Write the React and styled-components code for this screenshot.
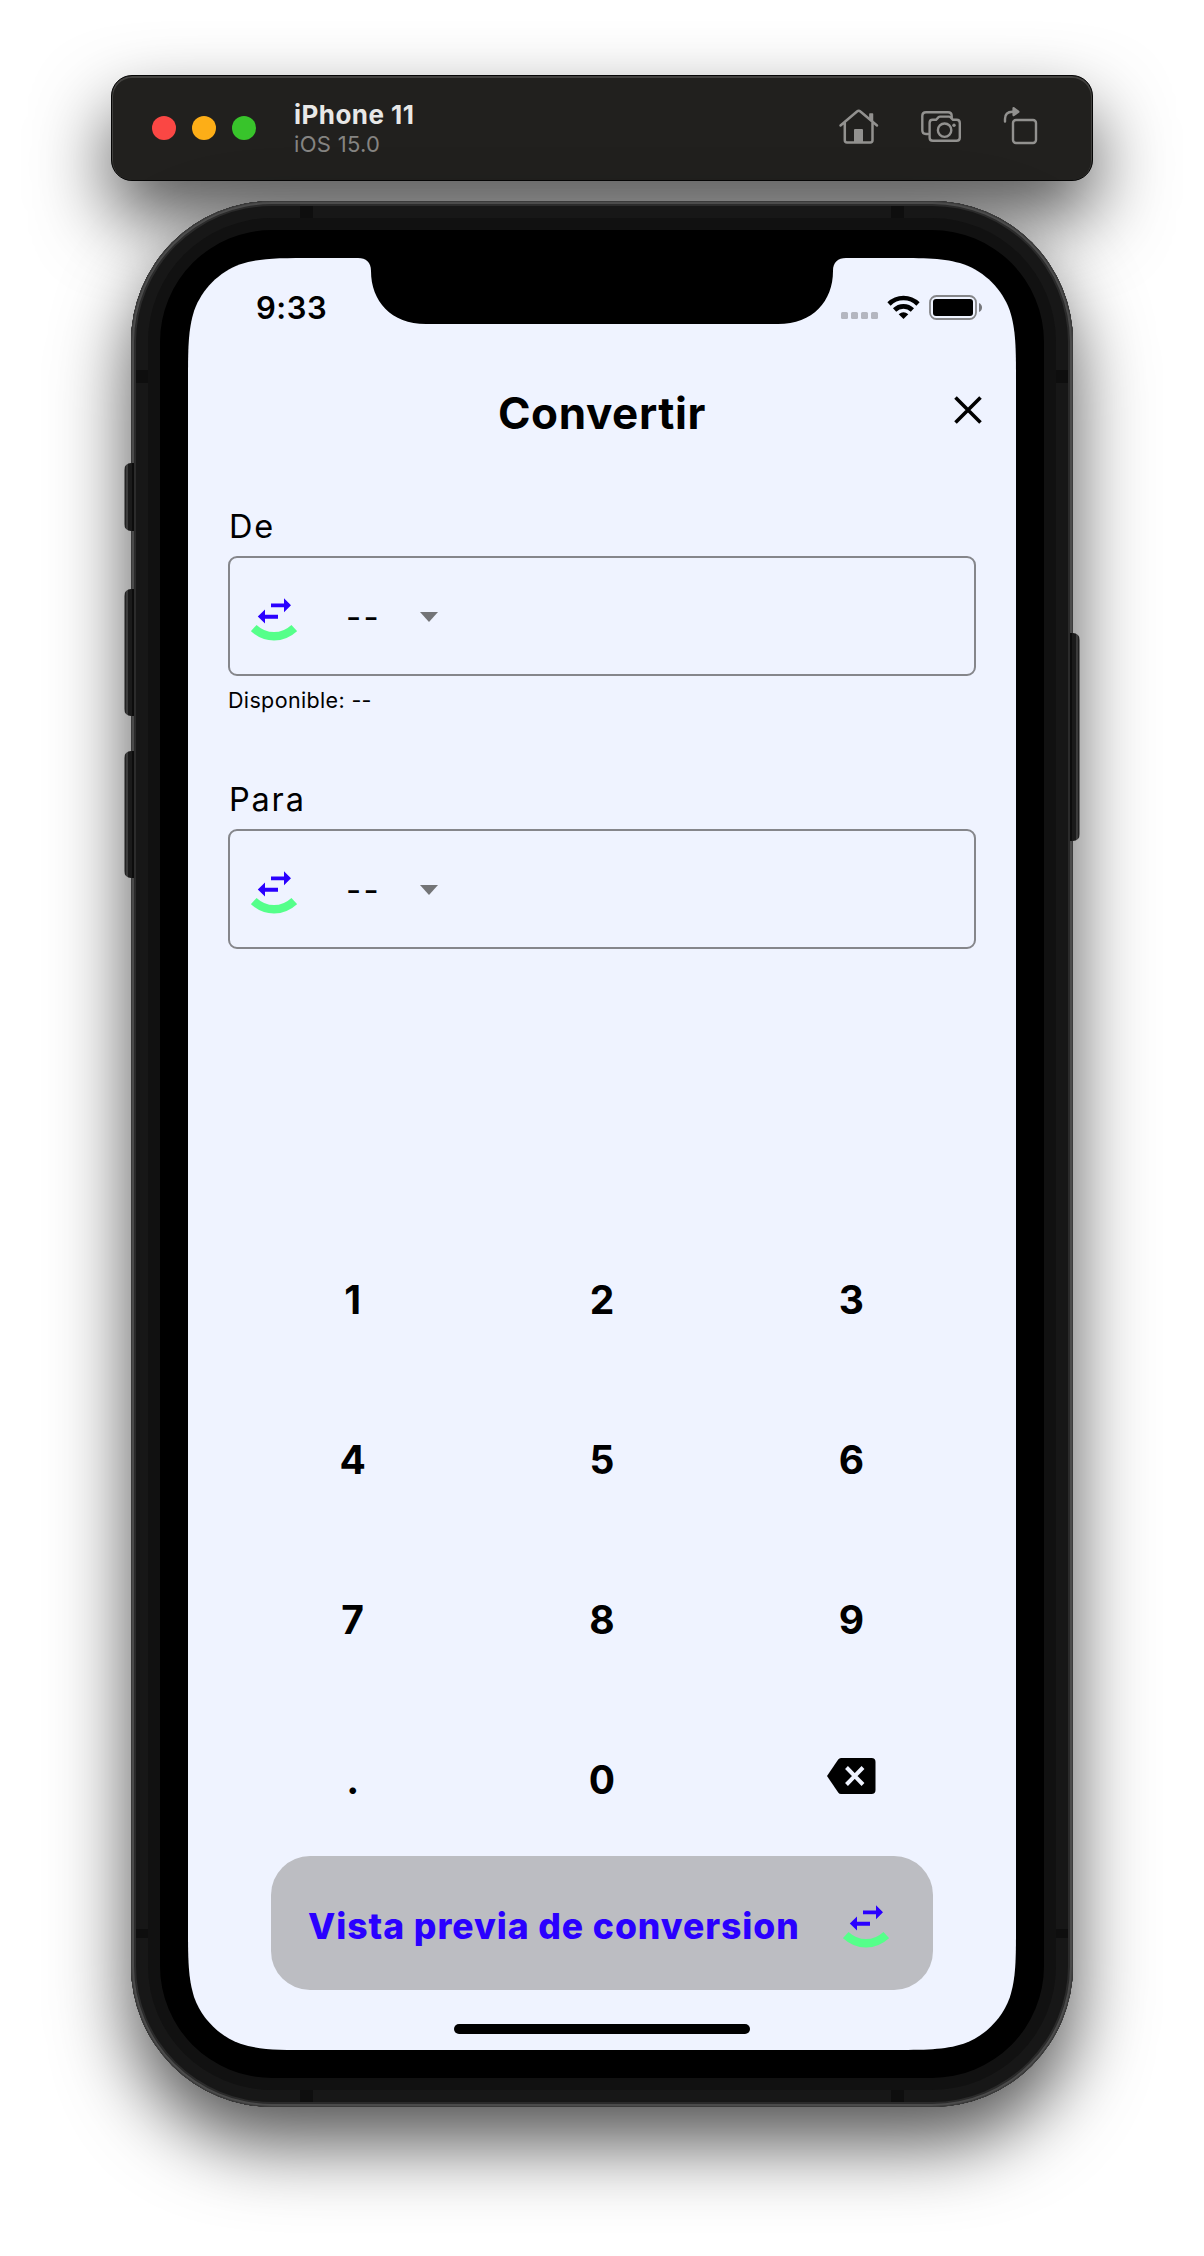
import React from "react";
import styled, { createGlobalStyle } from "styled-components";

const Global = createGlobalStyle`
  * { box-sizing: border-box; }
  body { margin: 0; background: #fff; font-family: Inter, "Liberation Sans", sans-serif; }
`;

const shadow = "0 36px 76px rgba(0, 0, 0, 0.68)";

// Outline of a w x h panel with continuous (squircle) corners of radius r.
const smoothOutline = (w, h, r) => {
  const [a, b, c, d, e, f, g] = [1.52866, 1.08849, 0.86841, 0.63149, 0.37282, 0.16906, 0.07491].map((k) => k * r);
  return [
    `M${a} 0H${w - a}`,
    `C${w - b} 0 ${w - c} 0 ${w - d} ${g}C${w - e} ${f} ${w - f} ${e} ${w - g} ${d}C${w} ${c} ${w} ${b} ${w} ${a}`,
    `V${h - a}`,
    `C${w} ${h - b} ${w} ${h - c} ${w - g} ${h - d}C${w - f} ${h - e} ${w - e} ${h - f} ${w - d} ${h - g}C${w - c} ${h} ${w - b} ${h} ${w - a} ${h}`,
    `H${a}`,
    `C${b} ${h} ${c} ${h} ${d} ${h - g}C${e} ${h - f} ${f} ${h - e} ${g} ${h - d}C0 ${h - c} 0 ${h - b} 0 ${h - a}`,
    `V${a}`,
    `C0 ${b} 0 ${c} ${g} ${d}C${f} ${e} ${e} ${f} ${d} ${g}C${c} 0 ${b} 0 ${a} 0Z`,
  ].join("");
};

const Stage = styled.main`
  width: 1204px;
  height: 2256px;
  padding-top: 75px;
  display: flex;
  flex-direction: column;
  align-items: center;
  gap: 20px;
  overflow: hidden;
`;

const Toolbar = styled.header`
  width: 982px;
  height: 106px;
  flex: none;
  border-radius: 21px;
  background: #21201e;
  border: 1px solid #050505;
  box-shadow: inset 0 1px 0 1px #42413f, ${shadow};
  display: flex;
  align-items: center;
  padding: 0 54px 0 40px;
`;

const Lights = styled.div`
  display: flex;
  gap: 16px;
`;

const Light = styled.span`
  width: 24px;
  height: 24px;
  border-radius: 50%;
  background: ${(p) => p.$color};
`;

const Device = styled.div`
  margin-left: 38px;
  flex: 1;
`;

const DeviceName = styled.div`
  font-size: 26px;
  line-height: 31px;
  font-weight: 700;
  color: #e8e8e7;
  letter-spacing: 0.45px;
`;

const DeviceOs = styled.div`
  font-size: 22px;
  line-height: 28px;
  color: #858482;
  letter-spacing: 0.3px;
`;

const Tools = styled.div`
  display: flex;
  align-items: center;
  gap: 40px;
  margin-bottom: 5px;
`;

const Phone = styled.section`
  position: relative;
  width: 942px;
  height: 1906px;
  flex: none;
  padding: 57px;
  border-radius: 141px;
  background: #000;
  box-shadow: inset 0 0 0 1px #3a3a3a, inset 0 0 0 3px #4b4b4b, inset 0 0 0 5px #2b2b2b,
    inset 0 0 0 17px #171717, inset 0 0 0 29px #111, ${shadow};
`;

const Antenna = styled.i`
  position: absolute;
  left: ${(p) => p.$x}px;
  top: ${(p) => p.$y}px;
  width: ${(p) => p.$w}px;
  height: ${(p) => p.$h}px;
  background: #0e0e0e;
`;

const SideButton = styled.i`
  position: absolute;
  top: ${(p) => p.$y}px;
  ${(p) => (p.$right ? "right: -7px;" : "left: -7px;")}
  width: 10px;
  height: ${(p) => p.$h}px;
  background: linear-gradient(${(p) => (p.$right ? "to left" : "to right")}, #6a6a6a 0 1px, #222 1px 2px, #3c3c3c 2px 4px, #1a1a1a 4px 8px, #0c0c0c 8px);
  border-radius: ${(p) => (p.$right ? "0 7px 7px 0" : "7px 0 0 7px")};
`;

const Screen = styled.div`
  position: relative;
  width: 828px;
  height: 1792px;
  clip-path: path("${smoothOutline(828, 1792, 83)}");
  background: #eff3ff;
  color: #000;
  display: flex;
  flex-direction: column;
`;

const Notch = styled.svg`
  position: absolute;
  top: 0;
  left: 170px;
`;

const StatusBar = styled.div`
  height: 100px;
  flex: none;
  padding: 0 33px 0 68px;
  display: flex;
  align-items: center;
  justify-content: space-between;
`;

const Clock = styled.time`
  font-size: 31px;
  line-height: 40px;
  font-weight: 600;
  letter-spacing: 0.5px;
`;

const StatusIcons = styled.svg`
  margin-bottom: 2px;
`;

const Header = styled.div`
  height: 109px;
  flex: none;
  display: grid;
  grid-template-columns: 1fr auto 1fr;
  align-items: center;
`;

const Title = styled.h1`
  grid-column: 2;
  margin: 0;
  font-size: 44px;
  line-height: 54px;
  font-weight: 700;
  letter-spacing: 0.6px;
`;

const CloseButton = styled.button`
  justify-self: end;
  margin: 0 33px 5px 0;
  padding: 0;
  border: 0;
  background: none;
  display: flex;
`;

const Field = styled.div`
  margin: 0 40px;
  padding-top: ${(p) => p.$top || 0}px;
  height: ${(p) => p.$h}px;
  flex: none;
`;

const Label = styled.div`
  font-size: 32.5px;
  line-height: 40px;
  letter-spacing: 1.8px;
  padding-left: 1px;
  margin-bottom: 9px;
`;

const Select = styled.div`
  height: 120px;
  border: 2px solid #85868b;
  border-radius: 9px;
  display: flex;
  align-items: center;
  padding-left: 21px;
`;

const Value = styled.span`
  font-size: 33px;
  line-height: 40px;
  letter-spacing: 2.4px;
  width: 74px;
  margin: 2px 0 0 49px;
`;

const Caret = styled.i`
  border: solid transparent;
  border-width: 10px 9.5px 0;
  border-top-color: #737477;
  margin-top: 1px;
`;

const Available = styled.div`
  margin-top: 9px;
  font-size: 21.5px;
  line-height: 30px;
  letter-spacing: 0.35px;
`;

const Keypad = styled.div`
  margin: auto 40px -4px;
  display: grid;
  grid-template-columns: repeat(3, 1fr);
  grid-auto-rows: 160px;
`;

const Key = styled.button`
  border: 0;
  padding: 0 0 ${(p) => (p.$lift ? 8 : 0)}px;
  background: none;
  color: #000;
  font: 700 39px/48px Inter, sans-serif;
  display: flex;
  align-items: center;
  justify-content: center;
`;

const Preview = styled.button`
  align-self: center;
  width: 662px;
  height: 134px;
  flex: none;
  border: 0;
  border-radius: 39px;
  background: #bcbdc2;
  color: #2a00ff;
  font: 800 35.5px/44px Inter, sans-serif;
  letter-spacing: 0.95px;
  display: flex;
  align-items: center;
  justify-content: space-between;
  padding: 8px 44px 0 37px;
`;

const HomeArea = styled.div`
  height: 60px;
  flex: none;
  display: flex;
  justify-content: center;
  padding-top: 34px;
`;

const HomeBar = styled.i`
  width: 296px;
  height: 10px;
  border-radius: 5px;
  background: #000;
`;

const SwapGlyph = styled.svg`
  display: block;
  flex: none;
  margin-top: ${(p) => p.$drop || 0}px;
`;

const SwapIcon = ({ drop }) => (
  <SwapGlyph width="46" height="44" viewBox="0 0 46 44" $drop={drop}>
    <path fill="#2a00ff" d="M20 5.500h13V0.300l7 7-7 7V9.300H20z M27 16.800v4H14v4.800l-7.200-7 7.200-7v5.200z" />
    <path fill="none" stroke="#55ff8a" strokeWidth="8.400" d="M2.700 30C14.500 41 31.500 41 43.300 30" />
  </SwapGlyph>
);

const SelectRow = () => (
  <Select>
    <SwapIcon drop={7} />
    <Value>--</Value>
    <Caret />
  </Select>
);

const digits = ["1", "2", "3", "4", "5", "6", "7", "8", "9", ".", "0"];

export default function App() {
  return (
    <>
      <Global />
      <Stage>
        <Toolbar>
          <Lights>
            <Light $color="#fa4744" />
            <Light $color="#fdae17" />
            <Light $color="#38c42b" />
          </Lights>
          <Device>
            <DeviceName>iPhone 11</DeviceName>
            <DeviceOs>iOS 15.0</DeviceOs>
          </Device>
          <Tools>
            <svg width="42" height="40" viewBox="838 106 42 40" fill="none" stroke="#92918f" strokeWidth="2.5" strokeLinecap="round" strokeLinejoin="round">
              <path d="M840.500 125.500L857 111.500Q858.700 110 860.400 111.500L877 125.500M844.800 123V140.300Q844.800 142.500 847 142.500H870.300Q872.500 142.500 872.500 140.300V123" />
              <path d="M869.900 114H872.500V121L869.900 118.500Z" fill="#92918f" strokeWidth="1.500" />
              <path d="M854 143V130Q854 129 855 129H862Q863 129 863 130V143Z" fill="#92918f" stroke="none" />
            </svg>
            <svg width="42" height="40" viewBox="920 107 42 40" fill="none" stroke="#92918f" strokeWidth="2.4" strokeLinecap="round" strokeLinejoin="round">
              <path d="M928 135H926Q922.300 135 922.300 131.300V117Q922.300 113.300 926 113.300H948Q951.700 113.300 951.700 117V118.800" />
              <path d="M932.500 120.800H936L938.600 118.200Q939.200 117.600 940 117.600H949Q949.800 117.600 950.400 118.200L953 120.800H956.500Q959.800 120.800 959.800 124V138.500Q959.800 141.800 956.500 141.800H932.800Q929.600 141.800 929.600 138.500V124Q929.600 120.800 932.500 120.800Z" />
              <circle cx="944.600" cy="131.200" r="6.700" />
              <circle cx="954" cy="126.200" r="1.700" fill="#92918f" stroke="none" />
            </svg>
            <svg width="36" height="40" viewBox="1002 104 36 40" fill="none" stroke="#92918f" strokeWidth="2.400" strokeLinecap="round" strokeLinejoin="round">
              <path d="M1005 119.500V117Q1005 109.700 1012.500 109.700H1014" />
              <path d="M1013.600 106.300L1018.300 109.700L1013.600 113.100Z" fill="#92918f" />
              <rect x="1013" y="118" width="23" height="23" rx="3" />
            </svg>
          </Tools>
        </Toolbar>

        <Phone>
          <Antenna $x={169} $y={5} $w={13} $h={12} />
          <Antenna $x={760} $y={5} $w={13} $h={12} />
          <Antenna $x={5} $y={169} $w={12} $h={13} />
          <Antenna $x={925} $y={169} $w={12} $h={13} />
          <Antenna $x={5} $y={1728} $w={12} $h={9} />
          <Antenna $x={925} $y={1728} $w={12} $h={9} />
          <Antenna $x={169} $y={1889} $w={13} $h={12} />
          <Antenna $x={760} $y={1889} $w={13} $h={12} />
          <SideButton $y={262} $h={68} />
          <SideButton $y={388} $h={127} />
          <SideButton $y={550} $h={127} />
          <SideButton $right $y={432} $h={208} />
          <Screen>
            <Notch width="488" height="66" viewBox="0 0 488 66">
              <path d="M0 0H488C480 0 475 4 475 13C475 43 455 66 420 66H68C33 66 13 43 13 13C13 4 8 0 0 0Z" />
            </Notch>
            <StatusBar>
              <Clock>9:33</Clock>
              <StatusIcons width="142" height="26" viewBox="841 294 142 26">
                <g fill="#b4b6c0">
                  <rect x="841" y="312" width="7" height="7" rx="1.500" />
                  <rect x="851" y="312" width="7" height="7" rx="1.500" />
                  <rect x="861" y="312" width="7" height="7" rx="1.500" />
                  <rect x="871" y="312" width="7" height="7" rx="1.500" />
                </g>
                <g fill="none" stroke="#000" strokeWidth="4.600">
                  <path d="M889 304A20.500 20.500 0 0 1 918 304" />
                  <path d="M894.600 310A12.700 12.700 0 0 1 912.400 310" />
                </g>
                <path d="M903.500 319L898.700 314.200Q903.500 310.200 908.300 314.200Z" />
                <rect x="930" y="296" width="46" height="23" rx="6.500" fill="none" stroke="#858689" strokeWidth="1.800" />
                <rect x="933" y="299" width="40" height="17" rx="3" />
                <path d="M979 303Q982 304.500 982 307.500T979 312Z" fill="#77787c" />
              </StatusIcons>
            </StatusBar>
            <Header>
              <Title>Convertir</Title>
              <CloseButton aria-label="Cerrar">
                <svg width="30" height="30" viewBox="0 0 30 30" stroke="#000" strokeWidth="3.600">
                  <path d="M2.500 2.500L27.500 27.500M27.500 2.500L2.500 27.500" />
                </svg>
              </CloseButton>
            </Header>
            <Field $h={312} $top={40}>
              <Label>De</Label>
              <SelectRow />
              <Available>Disponible: --</Available>
            </Field>
            <Field $h={180} $top={1}>
              <Label>Para</Label>
              <SelectRow />
            </Field>
            <Keypad>
              {digits.map((d) => (
                <Key key={d}>{d}</Key>
              ))}
              <Key aria-label="Borrar" $lift>
                <svg width="49" height="36" viewBox="0 0 49 36">
                  <path d="M14 0H44.500Q48.500 0 48.500 4V32Q48.500 36 44.500 36H14Q12.300 36 11.200 34.500L0 18L11.200 1.500Q12.300 0 14 0Z" />
                  <path d="M19.500 9.500L36 26.500M36 9.500L19.500 26.500" stroke="#eff3ff" strokeWidth="4" />
                </svg>
              </Key>
            </Keypad>
            <Preview>
              <span>Vista previa de conversion</span>
              <SwapIcon />
            </Preview>
            <HomeArea>
              <HomeBar />
            </HomeArea>
          </Screen>
        </Phone>
      </Stage>
    </>
  );
}
